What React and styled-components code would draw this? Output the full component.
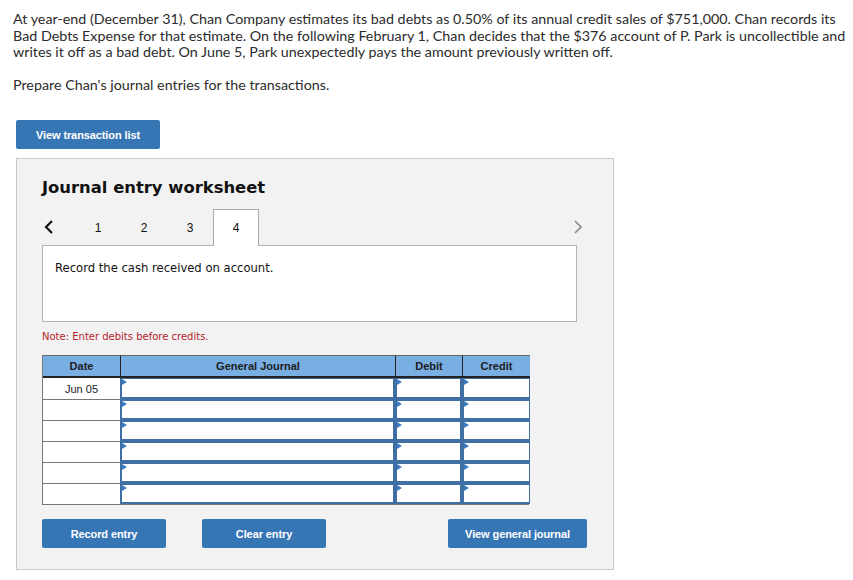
import React from 'react';
import styled, { createGlobalStyle } from 'styled-components';

const GlobalStyle = createGlobalStyle`
  html, body {
    margin: 0;
    padding: 0;
    background: #fff;
  }
`;

const Page = styled.div`
  padding: 11px 0 0 13px;
  width: 853px;
  box-sizing: border-box;
`;

const Intro = styled.p`
  margin: 0;
  font-family: Lato, "Liberation Sans", sans-serif;
  font-size: 14.3px;
  line-height: 16.6px;
  color: #2b2b2b;
  width: 840px;
  white-space: nowrap;
`;

const Prompt = styled(Intro)`
  margin-top: 16px;
`;

const BlueButton = styled.button`
  display: flex;
  align-items: center;
  justify-content: center;
  width: ${p => p.$w}px;
  height: 29px;
  padding: 0;
  margin-left: ${p => p.$gap || 0}px;
  border: none;
  border-radius: 2px;
  background: #3776b5;
  color: #fff;
  font-family: "Liberation Sans", Arial, sans-serif;
  font-weight: bold;
  font-size: 11px;
  letter-spacing: -0.1px;
  cursor: pointer;
`;

const TopButton = styled(BlueButton)`
  margin: 27px 0 0 3px;
`;

const Panel = styled.section`
  margin: 9px 0 0 3px;
  width: 598px;
  height: 412px;
  box-sizing: border-box;
  border: 1px solid #c9c9c9;
  background: #f2f2f2;
  padding: 19px 35px 0 25px;
`;

const Title = styled.h2`
  margin: 0;
  font-family: "DejaVu Sans", Verdana, sans-serif;
  font-weight: bold;
  font-size: 16.4px;
  line-height: 20px;
  color: #111;
`;

const TabRow = styled.div`
  display: flex;
  align-items: stretch;
  height: 36px;
  margin-top: 11px;
  position: relative;
  z-index: 1;
`;

const Arrow = styled.span`
  display: flex;
  align-items: center;
  justify-content: ${p => (p.$right ? 'flex-end' : 'flex-start')};
  width: ${p => (p.$right ? 'auto' : '31px')};
  flex: ${p => (p.$right ? '1' : 'none')};
  padding-left: ${p => (p.$right ? '0' : '2px')};
  margin-right: ${p => (p.$right ? '-5px' : '0')};
`;

const Tab = styled.div`
  width: 46px;
  box-sizing: border-box;
  display: flex;
  align-items: center;
  justify-content: center;
  font-family: "Liberation Sans", Arial, sans-serif;
  font-size: 12px;
  color: #111;
  border: 1px solid ${p => (p.$active ? '#a9a9a9' : 'transparent')};
  border-bottom: none;
  background: ${p => (p.$active ? '#fff' : 'transparent')};
  margin-bottom: ${p => (p.$active ? '-1px' : '0')};
  height: ${p => (p.$active ? '37px' : '36px')};
`;

const InfoBox = styled.div`
  width: 535px;
  height: 77px;
  box-sizing: border-box;
  border: 1px solid #b3b3b3;
  background: #fff;
  padding: 15px 12px;
  font-family: "DejaVu Sans", Verdana, sans-serif;
  font-size: 11.6px;
  color: #111;
`;

const Note = styled.div`
  margin-top: 9px;
  font-family: "DejaVu Sans", Verdana, sans-serif;
  font-size: 10px;
  color: #b4232b;
`;

const Table = styled.div`
  margin-top: 13px;
  width: 487px;
  display: grid;
  grid-template-columns: 77px 275px 67px 68px;
  border: 1px solid #777;
  border-top: none;
  box-sizing: border-box;
`;

const HeadCell = styled.div`
  height: 23px;
  box-sizing: border-box;
  display: flex;
  align-items: center;
  justify-content: center;
  background: #78aee1;
  border-top: 1px solid #666;
  border-bottom: 2px solid #222;
  border-left: ${p => (p.$first ? 'none' : '1px solid #222')};
  font-family: "Liberation Sans", Arial, sans-serif;
  font-weight: bold;
  font-size: 11px;
  color: #1d1d1d;
`;

const DateCell = styled.div`
  height: 21px;
  box-sizing: border-box;
  display: flex;
  align-items: center;
  justify-content: center;
  background: #fff;
  border-top: ${p => (p.$top ? 'none' : '1px solid #777')};
  font-family: "Liberation Sans", Arial, sans-serif;
  font-size: 11px;
  color: #222;
`;

const InputCell = styled.div`
  height: 21px;
  box-sizing: border-box;
  position: relative;
  background: #fff;
  border: 2px solid #3f6fa3;
  border-top-width: ${p => (p.$top ? '1px' : '2px')};
  border-right-width: ${p => (p.$last ? '1px' : '2px')};

  &::before {
    content: '';
    position: absolute;
    left: 0;
    top: 0;
    border-top: 3px solid transparent;
    border-bottom: 3px solid transparent;
    border-left: 5px solid #3b7bc4;
  }
`;

const ButtonRow = styled.div`
  display: flex;
  align-items: center;
  margin-top: 14px;
  width: 545px;
`;

const Spacer = styled.div`
  flex: 1;
`;

const Chevron = ({ dir, color }) => (
  <svg width="10" height="14" viewBox="0 0 10 14" fill="none">
    <path
      d={dir === 'left' ? 'M8 1 L2 7 L8 13' : 'M2 1 L8 7 L2 13'}
      stroke={color}
      strokeWidth={dir === 'left' ? 2.2 : 1.6}
    />
  </svg>
);

const rows = ['Jun 05', '', '', '', '', ''];

export default function App() {
  return (
    <Page>
      <GlobalStyle />
      <Intro>
        At year-end (December 31), Chan Company estimates its bad debts as 0.50% of its annual credit sales of $751,000. Chan records its
        <br />
        Bad Debts Expense for that estimate. On the following February 1, Chan decides that the $376 account of P. Park is uncollectible and
        <br />
        writes it off as a bad debt. On June 5, Park unexpectedly pays the amount previously written off.
      </Intro>
      <Prompt>Prepare Chan's journal entries for the transactions.</Prompt>
      <TopButton $w={144}>View transaction list</TopButton>
      <Panel>
        <Title>Journal entry worksheet</Title>
        <TabRow>
          <Arrow>
            <Chevron dir="left" color="#111" />
          </Arrow>
          {[1, 2, 3, 4].map(n => (
            <Tab key={n} $active={n === 4}>
              {n}
            </Tab>
          ))}
          <Arrow $right>
            <Chevron dir="right" color="#8a8a8a" />
          </Arrow>
        </TabRow>
        <InfoBox>Record the cash received on account.</InfoBox>
        <Note>Note: Enter debits before credits.</Note>
        <Table>
          <HeadCell $first>Date</HeadCell>
          <HeadCell>General Journal</HeadCell>
          <HeadCell>Debit</HeadCell>
          <HeadCell>Credit</HeadCell>
          {rows.map((d, i) => (
            <React.Fragment key={i}>
              <DateCell $top={i === 0}>{d}</DateCell>
              <InputCell $top={i === 0} />
              <InputCell $top={i === 0} />
              <InputCell $top={i === 0} $last />
            </React.Fragment>
          ))}
        </Table>
        <ButtonRow>
          <BlueButton $w={124}>Record entry</BlueButton>
          <BlueButton $w={124} $gap={36}>Clear entry</BlueButton>
          <Spacer />
          <BlueButton $w={139}>View general journal</BlueButton>
        </ButtonRow>
      </Panel>
    </Page>
  );
}
